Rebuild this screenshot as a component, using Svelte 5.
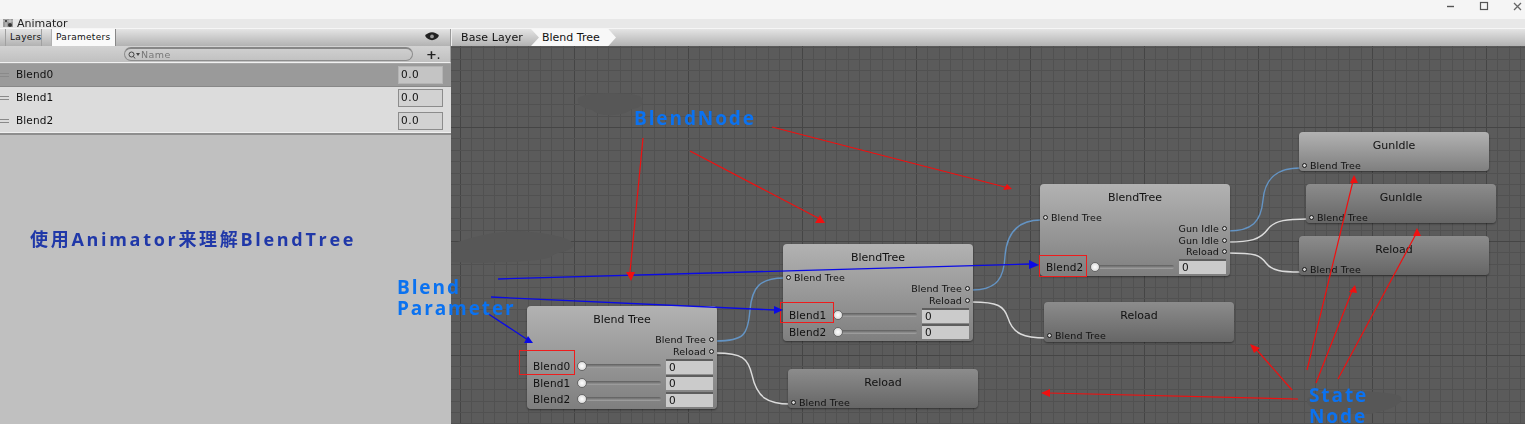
<script>
  // parameters in the left list
  const params = [
    { name: 'Blend0', on: true },
    { name: 'Blend1' },
    { name: 'Blend2' }
  ];

  // canvas starts at x=451 y=46, everything below is in page coords
  const nodes = [
    { title: 'Blend Tree', x: 527, y: 306, h: 103, kind: 'tree', outs: ['Blend Tree', 'Reload'], sliders: ['Blend0', 'Blend1', 'Blend2'] },
    { title: 'BlendTree', x: 783, y: 244, h: 97, kind: 'tree', input: true, outs: ['Blend Tree', 'Reload'], sliders: ['Blend1', 'Blend2'] },
    { title: 'BlendTree', x: 1040, y: 184, h: 92, kind: 'tree', input: true, outs: ['Gun Idle', 'Gun Idle', 'Reload'], sliders: ['Blend2'] },
    { title: 'GunIdle', x: 1299, y: 132, h: 39, kind: 'tree', input: true },
    { title: 'GunIdle', x: 1306, y: 184, h: 39, kind: 'state', input: true },
    { title: 'Reload', x: 1299, y: 236, h: 39, kind: 'state', input: true },
    { title: 'Reload', x: 1044, y: 302, h: 40, kind: 'state', input: true },
    { title: 'Reload', x: 788, y: 369, h: 39, kind: 'state', input: true }
  ];

  const wires = [
    { d: 'M716,341 C744,341 748,335 750,310 C752,287 760,278 784,278', blue: true },
    { d: 'M716,353 C742,353 748,358 752,375 C757,398 768,404 790,404' },
    { d: 'M972,290 C998,290 1004,277 1005,256 C1007,230 1020,220 1041,220', blue: true },
    { d: 'M972,302 C998,302 1004,306 1008,318 C1013,334 1024,338 1046,338' },
    { d: 'M1228,231 C1252,231 1261,222 1263,200 C1265,177 1278,168 1300,168', blue: true },
    { d: 'M1228,242 C1250,242 1260,240 1268,229 C1275,220 1288,219 1307,219' },
    { d: 'M1228,253 C1256,253 1260,255 1266,263 C1272,271 1282,272 1300,272' }
  ];

  const redLines = [
    [643, 138, 630, 272], [690, 151, 818, 218], [772, 127, 1005, 187],
    [1298, 399, 1048, 393], [1292, 390, 1256, 349], [1307, 370, 1353, 181],
    [1316, 383, 1352, 291], [1338, 379, 1416, 234]
  ];
  const redHeads = [
    '626,272 635,272 631,281', '815,223 825,223 820,215', '1003,190 1012,189 1007,184',
    '1041,393 1050,389 1050,397', '1250,344 1260,348 1254,353', '1350,183 1358,183 1354,175',
    '1349,292 1357,293 1355,285', '1413,236 1421,236 1417,228'
  ];
  const blueLines = [
    [498, 279, 1030, 264], [491, 297, 775, 310], [487, 313, 528, 340]
  ];
  const blueHeads = [
    '1029,260 1029,269 1039,265', '774,306 774,314 783,310', '524,343 533,343 528,336'
  ];
  const boxes = [
    [519.5, 350.5, 55, 24], [780.5, 302.5, 53, 20], [1039.5, 255.5, 47, 21]
  ];

  const labels = [
    { text: 'BlendNode', x: 634, y: 110 },
    { text: 'Blend', x: 397, y: 279 },
    { text: 'Parameter', x: 397, y: 300 },
    { text: 'State', x: 1309, y: 387 },
    { text: 'Node', x: 1309, y: 408 }
  ];

  // grid lines, every 10th one is the heavy one
  const gridX = Array.from({ length: 97 }, (_, i) => ({ at: Math.round(460 + i * 11.4), major: i % 10 === 0 }));
  const gridY = Array.from({ length: 34 }, (_, i) => ({ at: Math.round(47.2 + i * 11.4), major: (i - 7) % 10 === 0 }));
</script>

<div class="page">
  <header class="titlebar">
    <svg class="win" viewBox="0 0 78 12" width="78" height="12">
      <line x1="2" y1="6.5" x2="9" y2="6.5" stroke="#555" stroke-width="1.4" />
      <rect x="35.5" y="2.5" width="7" height="7" fill="none" stroke="#555" stroke-width="1.2" />
      <path d="M69,3 L76,10 M76,3 L69,10" stroke="#666" stroke-width="1.3" />
    </svg>
  </header>

  <div class="windowtab">
    <svg class="anim-icon" viewBox="0 0 10 10" width="10" height="10">
      <rect x="0" y="1" width="10" height="8" fill="#9a9a9a" />
      <path d="M0,3 H10 M3,1 V9 M7,1 V9" stroke="#e6e6e6" stroke-width="0.6" />
      <circle cx="7" cy="7" r="2" fill="#333" />
      <circle cx="3" cy="3" r="1.2" fill="#444" />
    </svg>
    <span>Animator</span>
  </div>

  <div class="body">
    <aside class="side">
      <div class="tabs">
        <span class="tab">Layers</span>
        <span class="tab active">Parameters</span>
        <svg class="eye" viewBox="0 0 12 8" width="14" height="10">
          <path d="M0,3 C3,-1 9,-1 12,3 C9,8 3,8 0,3Z" fill="#222" />
          <circle cx="6" cy="3.5" r="1.6" fill="#999" />
        </svg>
      </div>
      <div class="search">
        <div class="pill">
          <svg viewBox="0 0 12 8" width="12" height="8">
            <circle cx="3.5" cy="3.5" r="2.5" fill="none" stroke="#444" />
            <path d="M5.5,5.5 L7,7.5" stroke="#444" />
            <path d="M8,2 H12 L10,5Z" fill="#444" />
          </svg>
          <span>Name</span>
        </div>
        <b class="plus">+<i>.</i></b>
      </div>
      <div class="list">
        {#each params as p}
          <div class="param" class:on={p.on}>
            <span class="grip"></span>
            <span class="pname">{p.name}</span>
            <span class="pvalue">0.0</span>
          </div>
        {/each}
      </div>
      <div class="side-fill"></div>
    </aside>

    <main class="main">
      <nav class="crumbs">
        <span class="crumb">Base Layer</span>
        <span class="crumb current">Blend Tree</span>
      </nav>
      <div class="canvas">
        <svg class="layer" viewBox="451 46 1074 378">
          <g shape-rendering="crispEdges">
            {#each gridX as l}
              <line x1={l.at + 0.5} y1="46" x2={l.at + 0.5} y2="424" stroke={l.major ? '#454545' : '#515151'} />
            {/each}
            {#each gridY as l}
              <line x1="451" y1={l.at + 0.5} x2="1525" y2={l.at + 0.5} stroke={l.major ? '#454545' : '#515151'} />
            {/each}
          </g>
          <!-- painted over smudges from the original picture -->
          <g fill="#575757">
            <path d="M578,98 C585,92 625,92 640,96 C646,102 642,108 632,109 C625,116 600,118 592,110 C582,108 576,104 578,98Z" />
            <path d="M451,243 C470,240 480,232 520,231 C550,233 572,238 574,245 C572,252 556,252 552,256 C548,262 480,264 452,262Z" />
            <path d="M1308,398 C1320,390 1380,389 1400,396 C1406,402 1392,410 1370,414 L1330,414 C1312,410 1304,404 1308,398Z" />
          </g>
          {#each wires as w}
            <path d={w.d} fill="none" stroke={w.blue ? '#6494c4' : '#dcdcdc'} stroke-width="1.4" />
          {/each}
        </svg>

        {#each nodes as n}
          <section class="node {n.kind}" style="left:{n.x - 451}px;top:{n.y - 46}px;height:{n.h}px">
            <h4>{n.title}</h4>
            {#if n.input}
              <div class="in"><i class="port"></i>Blend Tree</div>
            {/if}
            {#if n.outs}
              <div class="outs">
                {#each n.outs as o}
                  <div class="out">{o}<i class="port"></i></div>
                {/each}
              </div>
            {/if}
            {#if n.sliders}
              {#each n.sliders as s}
                <div class="slide">
                  <span class="sname">{s}</span>
                  <span class="track"><i class="thumb"></i></span>
                  <span class="num">0</span>
                </div>
              {/each}
            {/if}
          </section>
        {/each}
      </div>
    </main>
  </div>

  <!-- hand drawn notes on top of the whole shot -->
  <svg class="notes" viewBox="0 0 1525 424">
    {#each redLines as l}
      <line x1={l[0]} y1={l[1]} x2={l[2]} y2={l[3]} stroke="#f01010" stroke-width="1.2" />
    {/each}
    {#each blueLines as l}
      <line x1={l[0]} y1={l[1]} x2={l[2]} y2={l[3]} stroke="#0a0ae6" stroke-width="1.3" />
    {/each}
    {#each boxes as b}
      <rect x={b[0]} y={b[1]} width={b[2]} height={b[3]} fill="none" stroke="#ee1c1c" shape-rendering="crispEdges" />
    {/each}
    {#each redHeads as p}
      <polygon points={p} fill="#f01010" />
    {/each}
    {#each blueHeads as p}
      <polygon points={p} fill="#0a0ae6" />
    {/each}
  </svg>
  {#each labels as l}
    <span class="label" style="left:{l.x}px;top:{l.y}px">{l.text}</span>
  {/each}
  <span class="heading">使用Animator来理解BlendTree</span>
</div>

<style>
  :global(body) {
    margin: 0;
    background: #c0c0c0;
  }

  .page {
    position: relative;
    width: 1525px;
    height: 424px;
    overflow: hidden;
    display: flex;
    flex-direction: column;
    font-family: "DejaVu Sans", sans-serif;
    color: #111;
  }

  .titlebar {
    height: 19px;
    flex: none;
    background: #f5f5f5;
    display: flex;
    justify-content: flex-end;
    padding-right: 2px;
  }

  .windowtab {
    height: 10px;
    flex: none;
    background: #e8e8e8;
    border-bottom: 1px solid #f6f6f6;
    box-sizing: border-box;
    display: flex;
    gap: 4px;
    padding-left: 3px;
    font-size: 11px;
    line-height: 9px;
    color: #222;
    position: relative;
    z-index: 1;
  }

  .anim-icon {
    flex: none;
    margin-top: -1px;
  }

  /* the source shot is a scaled up capture, everything in it is a bit soft */
  .body {
    flex: 1;
    display: flex;
    min-height: 0;
    filter: blur(0.3px);
  }

  .side {
    width: 451px;
    flex: none;
    display: flex;
    flex-direction: column;
    background: #c0c0c0;
  }

  .tabs,
  .crumbs {
    height: 17px;
    flex: none;
    background: linear-gradient(#e4e4e4, #b2b2b2);
    display: flex;
    align-items: stretch;
    font-size: 10px;
  }

  .tabs {
    padding-left: 5px;
    gap: 9px;
    border-right: 1px solid #999;
  }

  .tab {
    width: 37px;
    border-left: 1px solid #a0a0a0;
    border-right: 1px solid #a0a0a0;
    padding-left: 4px;
    box-sizing: border-box;
    line-height: 17px;
    font-size: 9px;
    letter-spacing: 0.3px;
  }

  .tab.active {
    width: 65px;
    background: #fafafa;
    border-left-color: #b0b0b0;
    border-right-color: #888;
  }

  .eye {
    margin-left: auto;
    margin-right: 11px;
    margin-top: 3px;
  }

  .search {
    height: 17px;
    flex: none;
    background: linear-gradient(#d2d2d2, #c0c0c0);
    border-bottom: 1px solid #f0f0f0;
    box-sizing: border-box;
    padding: 1px 10px 0 124px;
    display: flex;
    gap: 13px;
    border-right: 1px solid #999;
  }

  .pill {
    width: 292px;
    height: 14px;
    box-sizing: border-box;
    border: 1px solid #8c8c8c;
    border-top: 2px solid #868686;
    border-radius: 7px;
    display: flex;
    align-items: center;
    gap: 1px;
    padding-left: 3px;
    font-size: 9.5px;
    letter-spacing: 0.4px;
    color: #777;
  }

  .plus {
    font-size: 13px;
    line-height: 15px;
    color: #222;
    white-space: nowrap;
  }

  .plus i {
    font-size: 8px;
    font-style: normal;
  }

  .list {
    flex: none;
    padding-bottom: 1px;
    border-bottom: 2px solid #8e8e8e;
    border-top: 1px solid #a6a6a6;
    background: #dedede;
    box-shadow: inset 0 -1px 0 #f0f0f0;
  }

  .param {
    height: 22.7px;
    display: flex;
    align-items: center;
    font-size: 10.5px;
    background: #dcdcdc;
    padding-right: 8px;
  }

  .param.on {
    background: #9a9a9a;
    border-bottom: 1px solid #888;
    box-sizing: border-box;
  }

  .grip {
    width: 9px;
    height: 2px;
    border-top: 1px solid #8a8a8a;
    border-bottom: 1px solid #8a8a8a;
  }

  .pname {
    margin-left: 7px;
    margin-top: -2px;
    flex: 1;
    letter-spacing: 0.1px;
  }

  .pvalue {
    width: 45px;
    height: 18px;
    box-sizing: border-box;
    border: 1px solid #8c8c8c;
    background: #d2d2d2;
    line-height: 15px;
    padding-left: 2px;
    letter-spacing: 0.5px;
  }

  .param.on .pvalue {
    background: #c4c4c4;
    border-color: #b4b4b4;
  }

  .side-fill {
    flex: 1;
  }

  .main {
    flex: 1;
    display: flex;
    flex-direction: column;
    min-width: 0;
  }

  .crumbs {
    font-size: 11px;
    line-height: 17px;
  }

  .crumb {
    padding-left: 9px;
    width: 70px;
    letter-spacing: 0.1px;
    border-left: 1px solid #eee;
  }

  .crumb.current {
    width: 85px;
    box-sizing: border-box;
    padding-left: 11px;
    letter-spacing: 0;
    background: #f8f8f8;
    border-left: 0;
    clip-path: polygon(0 0, 91% 0, 100% 50%, 91% 100%, 0 100%, 8px 50%);
  }

  .canvas {
    position: relative;
    flex: 1;
    background: #5b5b5b;
    overflow: hidden;
  }

  .layer {
    position: absolute;
    inset: 0;
    width: 100%;
    height: 100%;
  }

  .node {
    position: absolute;
    width: 190px;
    box-sizing: border-box;
    border-radius: 4px;
    box-shadow: 0 1px 2px rgba(0, 0, 0, 0.45);
    font-size: 9.5px;
    letter-spacing: 0.1px;
    overflow: hidden;
  }

  .node.tree {
    background: linear-gradient(#b2b2b2, #7f7f7f);
  }

  .node.state {
    background: linear-gradient(#8c8c8c, #666);
  }

  h4 {
    margin: 0;
    height: 26px;
    line-height: 28px;
    text-align: center;
    font-size: 11px;
    font-weight: normal;
    letter-spacing: 0;
  }

  .in {
    margin-top: 2px;
    height: 11px;
    line-height: 11px;
    display: flex;
    align-items: center;
    gap: 3px;
    padding-left: 3px;
  }

  .outs {
    margin-top: 2px;
    margin-bottom: 1px;
  }

  .in + .outs {
    margin-top: 0;
  }

  .out {
    height: 11.5px;
    line-height: 11.5px;
    display: flex;
    justify-content: flex-end;
    align-items: center;
    gap: 3px;
    padding-right: 3px;
  }

  .port {
    width: 5px;
    height: 5px;
    flex: none;
    box-sizing: border-box;
    border: 1px solid #1a1a1a;
    border-radius: 50%;
    background: #cfcfcf;
  }

  .slide {
    height: 16.5px;
    display: flex;
    align-items: center;
    padding-left: 6px;
    font-size: 10.5px;
  }

  .sname {
    width: 44px;
  }

  .track {
    position: relative;
    width: 84px;
    height: 4px;
    background: linear-gradient(#5e5e5e, #a4a4a4);
    border-radius: 2px;
  }

  .thumb {
    position: absolute;
    left: 0;
    top: -3px;
    width: 10px;
    height: 10px;
    box-sizing: border-box;
    border-radius: 50%;
    border: 1px solid #666;
    background: radial-gradient(#fff, #cfcfcf);
  }

  .num {
    margin-left: 5px;
    width: 47px;
    height: 15px;
    box-sizing: border-box;
    border-top: 2px solid #5e5e5e;
    background: #cbcbcb;
    line-height: 13px;
    padding-left: 3px;
  }

  .notes {
    position: absolute;
    inset: 0;
    width: 100%;
    height: 100%;
    pointer-events: none;
  }

  .label {
    position: absolute;
    font-family: "Open Sans", sans-serif;
    font-weight: 700;
    font-size: 19px;
    line-height: 16px;
    letter-spacing: 1.9px;
    color: #0b72f0;
  }

  .heading {
    position: absolute;
    left: 30px;
    top: 227px;
    font-family: "Open Sans", "Noto Sans CJK SC", sans-serif;
    font-weight: 700;
    font-size: 18px;
    line-height: 24px;
    letter-spacing: 2.7px;
    color: #2038a8;
    white-space: nowrap;
  }
</style>
